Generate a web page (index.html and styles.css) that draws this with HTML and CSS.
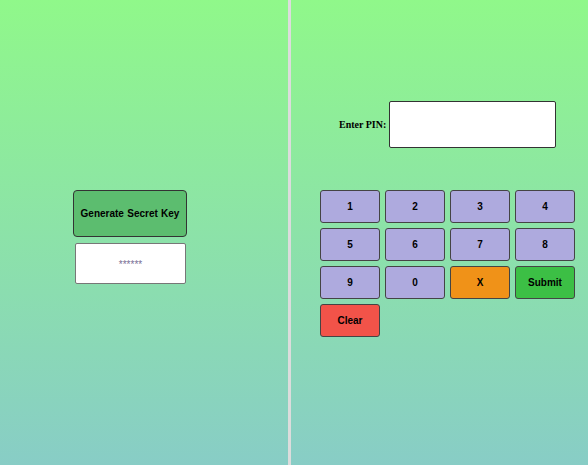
FILE: index.html
```html
<!DOCTYPE html>
<html>
<head>
<meta charset="utf-8">
<link rel="stylesheet" href="styles.css">
</head>
<body>
<div class="app">
  <div class="pane left">
    <div class="keygen">
      <button class="gen-btn">Generate Secret Key</button>
      <div class="secret">******</div>
    </div>
  </div>
  <div class="divider"></div>
  <div class="pane right">
    <div class="pin-row">
      <label class="pin-label">Enter PIN:</label>
      <div class="pin-input"></div>
    </div>
    <div class="keypad">
      <button class="key">1</button>
      <button class="key">2</button>
      <button class="key">3</button>
      <button class="key">4</button>
      <button class="key">5</button>
      <button class="key">6</button>
      <button class="key">7</button>
      <button class="key">8</button>
      <button class="key">9</button>
      <button class="key">0</button>
      <button class="key key-x">X</button>
      <button class="key key-submit">Submit</button>
      <button class="key key-clear">Clear</button>
    </div>
  </div>
</div>
</body>
</html>
```
FILE: styles.css
```css
html, body {
  margin: 0;
  padding: 0;
}
body {
  width: 588px;
  height: 465px;
  overflow: hidden;
  background: linear-gradient(to bottom, #90f88a, #88cdc6);
  font-family: "Liberation Sans", Arial, sans-serif;
}
.app {
  display: flex;
  height: 465px;
}
.pane {
  box-sizing: border-box;
}
.left {
  width: 288px;
  padding-top: 190px;
  padding-left: 73px;
}
.keygen {
  display: flex;
  flex-direction: column;
  align-items: flex-start;
  gap: 6px;
}
.gen-btn {
  width: 114px;
  height: 47px;
  background: #5cbd6f;
  border: 1px solid #333;
  border-radius: 4px;
  font-family: "Liberation Sans", Arial, sans-serif;
  font-weight: bold;
  font-size: 10px;
  word-spacing: 0.5px;
  color: #000;
  padding: 0;
}
.secret {
  box-sizing: border-box;
  margin-left: 2px;
  width: 111px;
  height: 41px;
  background: #fff;
  border: 1px solid #777;
  border-radius: 2px;
  display: flex;
  align-items: center;
  justify-content: center;
  padding-top: 2px;
  font-size: 10px;
  color: #7a6f96;
}
.divider {
  width: 3px;
  background: #dcdcdc;
}
.right {
  flex: 1;
  padding-top: 101px;
  padding-left: 29px;
}
.pin-row {
  display: flex;
  align-items: center;
  gap: 3px;
  padding-left: 19px;
}
.pin-label {
  font-family: "Liberation Serif", "Times New Roman", serif;
  font-weight: bold;
  font-size: 10px;
  color: #000;
}
.pin-input {
  box-sizing: border-box;
  width: 167px;
  height: 47px;
  background: #fff;
  border: 1px solid #333;
  border-radius: 2px;
}
.keypad {
  margin-top: 42px;
  display: grid;
  grid-template-columns: repeat(4, 60px);
  grid-auto-rows: 33px;
  gap: 5px;
}
.key {
  box-sizing: border-box;
  background: #aeaade;
  border: 1px solid #444;
  border-radius: 3px;
  font-family: "Liberation Sans", Arial, sans-serif;
  font-weight: bold;
  font-size: 10px;
  color: #000;
  padding: 0;
}
.key-x {
  background: #f09218;
}
.key-submit {
  background: #3cbf45;
}
.key-clear {
  background: #f25349;
}
```
